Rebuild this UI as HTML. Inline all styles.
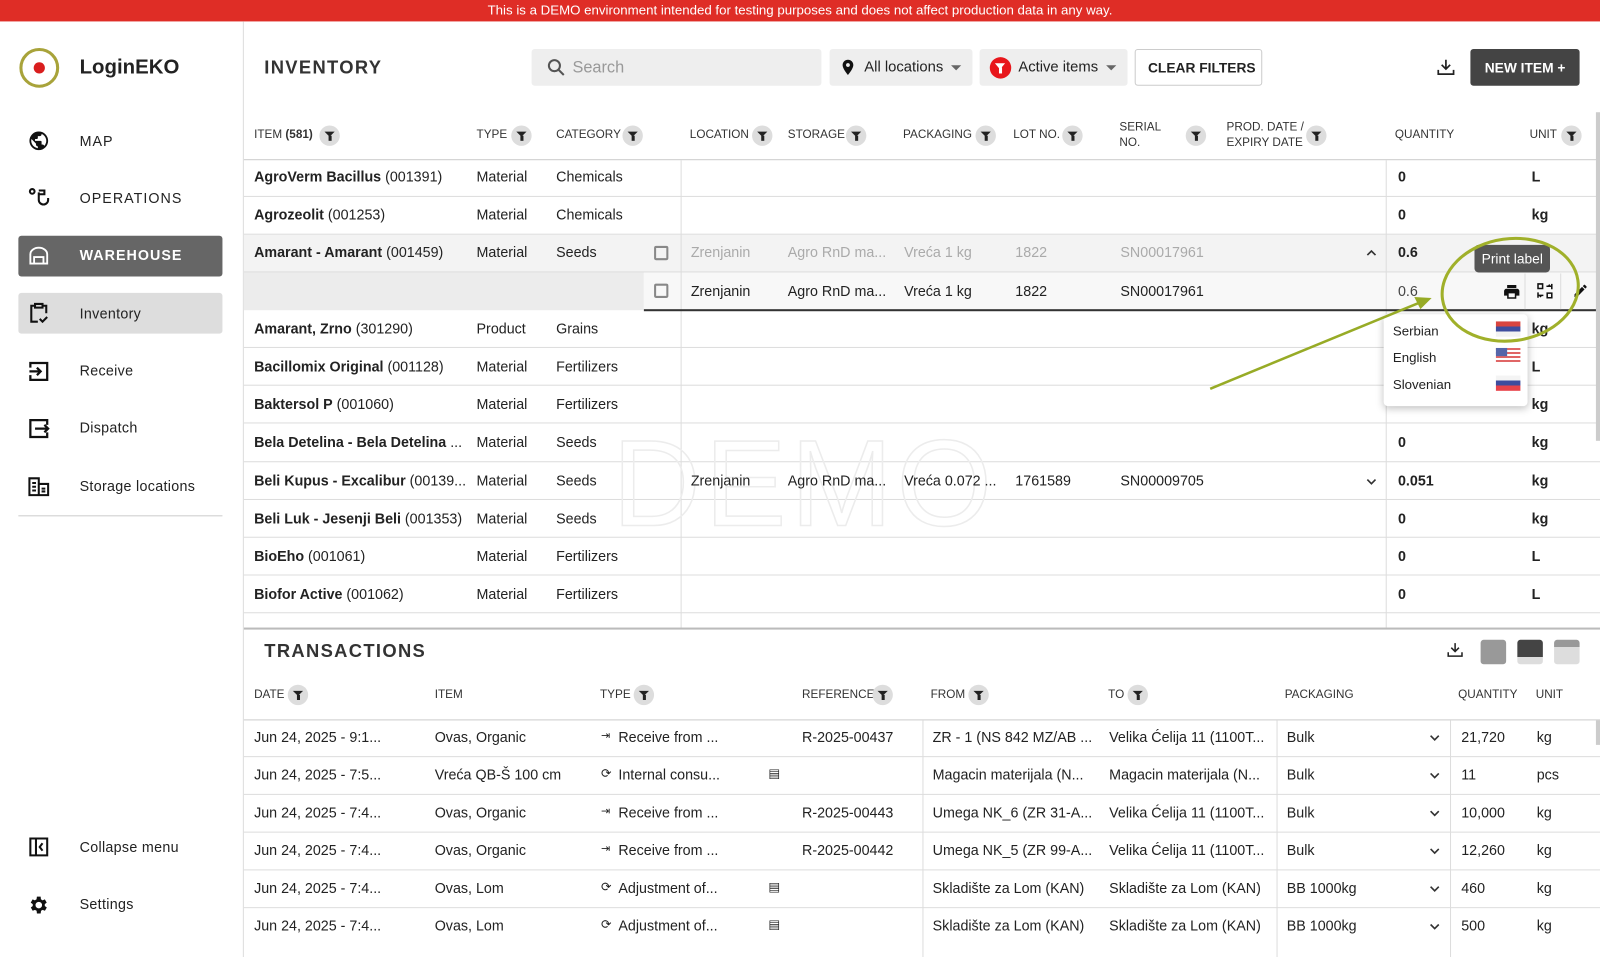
<!DOCTYPE html>
<html><head><meta charset="utf-8">
<style>
*{box-sizing:border-box;margin:0;padding:0}
body{width:1600px;height:938px;overflow:hidden;font-family:"Liberation Sans",Arial,sans-serif;color:#222;background:#fff;position:relative;font-size:14px}
#w{position:absolute;left:0;top:0;width:1568px;height:920px;transform:scale(1.020408);transform-origin:0 0}
.a{position:absolute;white-space:nowrap}
.banner{left:0;top:0;width:1568px;height:21px;background:#df2d26;color:#fff;font-size:13px;text-align:center;line-height:20px}
.side{left:0;top:21px;width:239px;height:917px;border-right:1px solid #ddd}
.nav{font-size:14px;letter-spacing:.3px}
.ic{position:absolute}
.f{position:absolute;width:20px;height:20px;border-radius:50%;background:#ddd}
.f:after{content:"";position:absolute;left:5px;top:6px;border-left:5px solid transparent;border-right:5px solid transparent;border-top:5px solid #222}
.f:before{content:"";position:absolute;left:8.5px;top:10px;width:3px;height:5px;background:#222}
.h{font-size:11.5px;color:#333}
.hl{position:absolute;height:1px;background:#ddd}
.vl{position:absolute;width:1px;background:#ddd}
.b{font-weight:bold}
.g{color:#aaa}
</style></head><body><div id="w">
<div class="a banner">This is a DEMO environment intended for testing purposes and does not affect production data in any way.</div>

<div class="a side"></div>
<div class="ic" style="left:19px;top:47px;width:39px;height:39px;border:3px solid #a8a33a;border-radius:50%"></div>
<div class="ic" style="left:33px;top:61px;width:11px;height:11px;background:#d91e1e;border-radius:50%"></div>
<div class="a" style="left:78px;top:55px;font-size:20px;font-weight:bold">LoginEKO</div>

<svg class="ic" style="left:27px;top:127px" width="22" height="22" viewBox="0 0 24 24"><path d="M12 2a10 10 0 1 0 0 20 10 10 0 0 0 0-20zm-1 17.9A8 8 0 0 1 4.2 10L9 15v1c0 1.1.9 2 2 2zm6.9-2.5A2 2 0 0 0 16 16h-1v-3c0-.6-.4-1-1-1H8v-2h2c.6 0 1-.4 1-1V7h2c1.1 0 2-.9 2-2v-.4a8 8 0 0 1 2.9 12.8z" fill="#111"/></svg>
<div class="a nav" style="left:78px;top:130px;letter-spacing:1px">MAP</div>
<svg class="ic" style="left:27px;top:183px" width="22" height="22" viewBox="0 0 24 24" fill="none" stroke="#111" stroke-width="2.2"><circle cx="5" cy="5" r="2.5"/><path d="M12 6v8a5 5 0 0 0 10 0v-2M12 4h6v4h-6"/></svg>
<div class="a nav" style="left:78px;top:186px;letter-spacing:1px">OPERATIONS</div>
<div class="ic" style="left:18px;top:231px;width:200px;height:40px;background:#666;border-radius:3px"></div>
<svg class="ic" style="left:27px;top:240px" width="22" height="22" viewBox="0 0 24 24" fill="none" stroke="#fff" stroke-width="2"><path d="M3 20V10a9 7 0 0 1 18 0v10zM7 20v-7h10v7"/></svg>
<div class="a nav" style="left:78px;top:242px;color:#fff;font-weight:bold;letter-spacing:1px">WAREHOUSE</div>
<div class="ic" style="left:18px;top:287px;width:200px;height:40px;background:#ddd;border-radius:3px"></div>
<svg class="ic" style="left:27px;top:296px" width="22" height="22" viewBox="0 0 24 24" fill="none" stroke="#111" stroke-width="2.2"><path d="M8 4H4v17h7M16 4h4v8M8 2h8v4H8zM13 18l3 3 5-5"/></svg>
<div class="a nav" style="left:78px;top:299px">Inventory</div>
<svg class="ic" style="left:27px;top:353px" width="22" height="22" viewBox="0 0 24 24" fill="none" stroke="#111" stroke-width="2.4"><path d="M3 8V3h18v18H3v-5M2 12h12M10 8l4 4-4 4"/></svg>
<div class="a nav" style="left:78px;top:355px">Receive</div>
<svg class="ic" style="left:27px;top:409px" width="22" height="22" viewBox="0 0 24 24" fill="none" stroke="#111" stroke-width="2.4"><path d="M21 8V3H3v18h18v-5M8 12h14M18 8l4 4-4 4"/></svg>
<div class="a nav" style="left:78px;top:411px">Dispatch</div>
<svg class="ic" style="left:27px;top:466px" width="22" height="22" viewBox="0 0 24 24" fill="none" stroke="#111" stroke-width="2.2"><path d="M2 3h10v18H2zM12 9h10v12H12zM5 8h4M5 12h4M5 16h4M15 14h4M15 17h4"/></svg>
<div class="a nav" style="left:78px;top:468px">Storage locations</div>
<div class="hl" style="left:18px;top:505px;width:200px;background:#ccc"></div>
<svg class="ic" style="left:27px;top:819px" width="22" height="22" viewBox="0 0 24 24" fill="none" stroke="#111" stroke-width="2.2"><path d="M3 3h18v18H3zM9 3v18M16 8l-3 4 3 4"/></svg>
<div class="a nav" style="left:78px;top:822px">Collapse menu</div>
<svg class="ic" style="left:27px;top:876px" width="22" height="22" viewBox="0 0 24 24"><path d="M19.4 13a7.5 7.5 0 0 0 0-2l2.1-1.6-2-3.5-2.5 1a7 7 0 0 0-1.7-1L15 3h-4l-.4 2.9a7 7 0 0 0-1.7 1l-2.5-1-2 3.5L6.6 11a7.5 7.5 0 0 0 0 2l-2.1 1.6 2 3.5 2.5-1a7 7 0 0 0 1.7 1L11 21h4l.4-2.9a7 7 0 0 0 1.7-1l2.5 1 2-3.5zM13 15.5a3.5 3.5 0 1 1 0-7 3.5 3.5 0 0 1 0 7z" fill="#111" transform="translate(-1 0)"/></svg>
<div class="a nav" style="left:78px;top:878px">Settings</div>

<!-- toolbar -->
<div class="a" style="left:259px;top:56px;font-size:18px;font-weight:bold;letter-spacing:1.3px;color:#333">INVENTORY</div>
<div class="ic" style="left:521px;top:48px;width:284px;height:36px;background:#eee;border-radius:3px"></div>
<svg class="ic" style="left:535px;top:56px" width="20" height="20" viewBox="0 0 24 24" fill="none" stroke="#555" stroke-width="2.4"><circle cx="10" cy="10" r="6.5"/><path d="M15 15l6 6"/></svg>
<div class="a" style="left:561px;top:58px;font-size:16px;color:#999">Search</div>
<div class="ic" style="left:813px;top:48px;width:140px;height:36px;background:#eee;border-radius:3px"></div>
<svg class="ic" style="left:822px;top:56px" width="18" height="20" viewBox="0 0 24 24"><path d="M12 2a7 7 0 0 0-7 7c0 5 7 13 7 13s7-8 7-13a7 7 0 0 0-7-7zm0 9.5a2.5 2.5 0 1 1 0-5 2.5 2.5 0 0 1 0 5z" fill="#111"/></svg>
<div class="a" style="left:847px;top:58px;font-size:14.5px">All locations</div>
<div class="ic" style="left:932px;top:64px;border-left:5px solid transparent;border-right:5px solid transparent;border-top:5px solid #666"></div>
<div class="ic" style="left:960px;top:48px;width:145px;height:36px;background:#eee;border-radius:3px"></div>
<div class="ic" style="left:970px;top:56px;width:21px;height:21px;background:#e8161b;border-radius:50%"></div>
<div class="ic" style="left:975px;top:62px;border-left:5.5px solid transparent;border-right:5.5px solid transparent;border-top:6px solid #fff"></div>
<div class="ic" style="left:979px;top:66px;width:3px;height:6px;background:#fff"></div>
<div class="a" style="left:998px;top:58px;font-size:14.5px">Active items</div>
<div class="ic" style="left:1084px;top:64px;border-left:5px solid transparent;border-right:5px solid transparent;border-top:5px solid #666"></div>
<div class="ic" style="left:1112px;top:48px;width:125px;height:36px;border:1px solid #ccc;border-radius:3px"></div>
<div class="a" style="left:1125px;top:59px;font-size:13.5px;font-weight:bold">CLEAR FILTERS</div>
<svg class="ic" style="left:1406px;top:56px" width="22" height="20" viewBox="0 0 24 24" fill="none" stroke="#222" stroke-width="2"><path d="M12 3v11M7 9l5 5 5-5M3 15v5h18v-5"/></svg>
<div class="ic" style="left:1441px;top:48px;width:107px;height:36px;background:#444;border-radius:3px"></div>
<div class="a" style="left:1455px;top:59px;color:#fff;font-weight:bold;font-size:13.5px">NEW ITEM +</div>

<!-- inventory header -->
<div class="a h" style="left:249px;top:126px">ITEM <b>(581)</b></div><div class="f" style="left:313px;top:123px"></div>
<div class="a h" style="left:467px;top:126px">TYPE</div><div class="f" style="left:501px;top:123px"></div>
<div class="a h" style="left:545px;top:126px">CATEGORY</div><div class="f" style="left:610px;top:123px"></div>
<div class="a h" style="left:676px;top:126px">LOCATION</div><div class="f" style="left:737px;top:123px"></div>
<div class="a h" style="left:772px;top:126px">STORAGE</div><div class="f" style="left:829px;top:123px"></div>
<div class="a h" style="left:885px;top:126px">PACKAGING</div><div class="f" style="left:956px;top:123px"></div>
<div class="a h" style="left:993px;top:126px">LOT NO.</div><div class="f" style="left:1041px;top:123px"></div>
<div class="a h" style="left:1097px;top:118px;line-height:15px">SERIAL<br>NO.</div><div class="f" style="left:1162px;top:123px"></div>
<div class="a h" style="left:1202px;top:118px;line-height:15px">PROD. DATE /<br>EXPIRY DATE</div><div class="f" style="left:1280px;top:123px"></div>
<div class="a h" style="left:1367px;top:126px">QUANTITY</div>
<div class="a h" style="left:1499px;top:126px">UNIT</div><div class="f" style="left:1530px;top:123px"></div>
<div class="hl" style="left:239px;top:156px;width:1329px;background:#ccc"></div>

<!-- row backgrounds -->
<div class="ic" style="left:239px;top:230px;width:1329px;height:37px;background:#f3f3f3"></div>
<div class="ic" style="left:239px;top:267px;width:392px;height:37px;background:#ececec"></div>
<div class="ic" style="left:631px;top:267px;width:937px;height:37px;background:#f8f8f8"></div>
<div class="vl" style="left:667px;top:157px;height:458px"></div>
<div class="vl" style="left:1358px;top:157px;height:458px"></div>
<div class="hl" style="left:239px;top:192px;width:1329px"></div>
<div class="hl" style="left:239px;top:229px;width:1329px"></div>
<div class="hl" style="left:239px;top:266px;width:1329px"></div>
<div class="hl" style="left:631px;top:303px;width:937px;height:2px;background:#333"></div>
<div class="hl" style="left:239px;top:340px;width:1329px"></div>
<div class="hl" style="left:239px;top:377px;width:1329px"></div>
<div class="hl" style="left:239px;top:414px;width:1329px"></div>
<div class="hl" style="left:239px;top:452px;width:1329px"></div>
<div class="hl" style="left:239px;top:489px;width:1329px"></div>
<div class="hl" style="left:239px;top:526px;width:1329px"></div>
<div class="hl" style="left:239px;top:563px;width:1329px"></div>
<div class="hl" style="left:239px;top:600px;width:1329px"></div>
<div class="ic" style="left:1564px;top:110px;width:4px;height:322px;background:#ccc"></div>

<div class="a" style="left:600px;top:405px;font-size:120px;color:transparent;letter-spacing:4px;-webkit-text-stroke:1.5px #ececec">DEMO</div>

<!-- rows -->
<div class="a" style="left:249px;top:165px"><b>AgroVerm Bacillus</b> (001391)</div><div class="a" style="left:467px;top:165px">Material</div><div class="a" style="left:545px;top:165px">Chemicals</div><div class="a b" style="left:1370px;top:165px">0</div><div class="a b" style="left:1501px;top:165px">L</div>
<div class="a" style="left:249px;top:202px"><b>Agrozeolit</b> (001253)</div><div class="a" style="left:467px;top:202px">Material</div><div class="a" style="left:545px;top:202px">Chemicals</div><div class="a b" style="left:1370px;top:202px">0</div><div class="a b" style="left:1501px;top:202px">kg</div>
<div class="a" style="left:249px;top:239px"><b>Amarant - Amarant</b> (001459)</div><div class="a" style="left:467px;top:239px">Material</div><div class="a" style="left:545px;top:239px">Seeds</div>
<div class="ic" style="left:641px;top:241px;width:14px;height:14px;border:2px solid #888;border-radius:2px"></div>
<div class="a g" style="left:677px;top:239px">Zrenjanin</div><div class="a g" style="left:772px;top:239px">Agro RnD ma...</div><div class="a g" style="left:886px;top:239px">Vreća 1 kg</div><div class="a g" style="left:995px;top:239px">1822</div><div class="a g" style="left:1098px;top:239px">SN00017961</div>
<svg class="ic" style="left:1338px;top:242px" width="12" height="12" viewBox="0 0 12 12" fill="none" stroke="#333" stroke-width="1.6"><path d="M2 8l4-4 4 4"/></svg>
<div class="a b" style="left:1370px;top:239px">0.6</div>
<div class="ic" style="left:641px;top:278px;width:14px;height:14px;border:2px solid #888;border-radius:2px"></div>
<div class="a" style="left:677px;top:277px">Zrenjanin</div><div class="a" style="left:772px;top:277px">Agro RnD ma...</div><div class="a" style="left:886px;top:277px">Vreća 1 kg</div><div class="a" style="left:995px;top:277px">1822</div><div class="a" style="left:1098px;top:277px">SN00017961</div>
<div class="a" style="left:1370px;top:277px;color:#444">0.6</div>
<div class="vl" style="left:1494px;top:268px;height:35px"></div><div class="vl" style="left:1529px;top:268px;height:35px"></div>
<svg class="ic" style="left:1472px;top:277px" width="19" height="18" viewBox="0 0 24 24"><path d="M19 8H5a3 3 0 0 0-3 3v6h4v4h12v-4h4v-6a3 3 0 0 0-3-3zm-3 11H8v-5h8zM18 3H6v4h12z" fill="#111"/></svg>
<svg class="ic" style="left:1505px;top:276px" width="18" height="18" viewBox="0 0 24 24" fill="none" stroke="#111" stroke-width="2"><path d="M3 3h6v6H3zM15 15h6v6h-6zM14 6h5l-2-2M10 18H5l2 2M3 14v7M21 3v7"/></svg>
<svg class="ic" style="left:1541px;top:277px" width="16" height="16" viewBox="0 0 24 24"><path d="M3 17.2V21h3.8L17.8 9.9l-3.7-3.7zM20.7 7a1 1 0 0 0 0-1.4l-2.3-2.3a1 1 0 0 0-1.4 0l-1.8 1.8 3.7 3.7z" fill="#111"/></svg>

<div class="a" style="left:249px;top:314px"><b>Amarant, Zrno</b> (301290)</div><div class="a" style="left:467px;top:314px">Product</div><div class="a" style="left:545px;top:314px">Grains</div><div class="a b" style="left:1501px;top:314px">kg</div>
<div class="a" style="left:249px;top:351px"><b>Bacillomix Original</b> (001128)</div><div class="a" style="left:467px;top:351px">Material</div><div class="a" style="left:545px;top:351px">Fertilizers</div><div class="a b" style="left:1501px;top:351px">L</div>
<div class="a" style="left:249px;top:388px"><b>Baktersol P</b> (001060)</div><div class="a" style="left:467px;top:388px">Material</div><div class="a" style="left:545px;top:388px">Fertilizers</div><div class="a b" style="left:1501px;top:388px">kg</div>
<div class="a" style="left:249px;top:425px"><b>Bela Detelina - Bela Detelina</b> ...</div><div class="a" style="left:467px;top:425px">Material</div><div class="a" style="left:545px;top:425px">Seeds</div><div class="a b" style="left:1370px;top:425px">0</div><div class="a b" style="left:1501px;top:425px">kg</div>
<div class="a" style="left:249px;top:463px"><b>Beli Kupus - Excalibur</b> (00139...</div><div class="a" style="left:467px;top:463px">Material</div><div class="a" style="left:545px;top:463px">Seeds</div>
<div class="a" style="left:677px;top:463px">Zrenjanin</div><div class="a" style="left:772px;top:463px">Agro RnD ma...</div><div class="a" style="left:886px;top:463px">Vreća 0.072 ...</div><div class="a" style="left:995px;top:463px">1761589</div><div class="a" style="left:1098px;top:463px">SN00009705</div>
<svg class="ic" style="left:1338px;top:466px" width="12" height="12" viewBox="0 0 12 12" fill="none" stroke="#333" stroke-width="1.6"><path d="M2 4l4 4 4-4"/></svg>
<div class="a b" style="left:1370px;top:463px">0.051</div><div class="a b" style="left:1501px;top:463px">kg</div>
<div class="a" style="left:249px;top:500px"><b>Beli Luk - Jesenji Beli</b> (001353)</div><div class="a" style="left:467px;top:500px">Material</div><div class="a" style="left:545px;top:500px">Seeds</div><div class="a b" style="left:1370px;top:500px">0</div><div class="a b" style="left:1501px;top:500px">kg</div>
<div class="a" style="left:249px;top:537px"><b>BioEho</b> (001061)</div><div class="a" style="left:467px;top:537px">Material</div><div class="a" style="left:545px;top:537px">Fertilizers</div><div class="a b" style="left:1370px;top:537px">0</div><div class="a b" style="left:1501px;top:537px">L</div>
<div class="a" style="left:249px;top:574px"><b>Biofor Active</b> (001062)</div><div class="a" style="left:467px;top:574px">Material</div><div class="a" style="left:545px;top:574px">Fertilizers</div><div class="a b" style="left:1370px;top:574px">0</div><div class="a b" style="left:1501px;top:574px">L</div>

<!-- tooltip + menu -->
<div class="ic" style="left:1445px;top:240px;width:74px;height:27px;background:#555;border-radius:4px"></div>
<div class="a" style="left:1452px;top:246px;color:#fff;font-size:13.5px">Print label</div>
<div class="ic" style="left:1356px;top:308px;width:141px;height:90px;background:#fff;border-radius:4px;box-shadow:0 2px 8px rgba(0,0,0,.25)"></div>
<div class="a" style="left:1365px;top:317px;font-size:13px">Serbian</div>
<div class="a" style="left:1365px;top:343px;font-size:13px">English</div>
<div class="a" style="left:1365px;top:369px;font-size:13px">Slovenian</div>
<div class="ic" style="left:1466px;top:315px;width:24px;height:15px;background:linear-gradient(#d8453f 33%,#3e4d9e 33% 66%,#f2f2f2 66%)"></div>
<div class="ic" style="left:1466px;top:341px;width:24px;height:15px;background:repeating-linear-gradient(#e06666 0 2px,#fff 2px 4px)"></div>
<div class="ic" style="left:1466px;top:341px;width:11px;height:8px;background:#5566aa"></div>
<div class="ic" style="left:1466px;top:368px;width:24px;height:15px;background:linear-gradient(#f4f4f4 33%,#3e4d9e 33% 66%,#e8434a 66%)"></div>
<svg class="ic" style="left:0;top:0;overflow:visible" width="1568" height="920"><ellipse cx="1480" cy="284" rx="67" ry="50" fill="none" stroke="#a0b02a" stroke-width="3" transform="rotate(-8 1480 284)"/><path d="M1186 381L1395 295" stroke="#97ab26" stroke-width="2.5"/><path d="M1403 292l-17-1 6 12z" fill="#97ab26"/></svg>

<!-- transactions -->
<div class="hl" style="left:239px;top:615px;width:1329px;height:2px;background:#bbb"></div>
<div class="a" style="left:259px;top:628px;font-size:18px;font-weight:bold;letter-spacing:1.3px;color:#333">TRANSACTIONS</div>
<svg class="ic" style="left:1416px;top:628px" width="20" height="18" viewBox="0 0 24 24" fill="none" stroke="#222" stroke-width="2"><path d="M12 3v11M7 9l5 5 5-5M3 15v5h18v-5"/></svg>
<div class="ic" style="left:1451px;top:627px;width:25px;height:24px;background:#999;border-radius:3px"></div>
<div class="ic" style="left:1487px;top:627px;width:25px;height:24px;background:linear-gradient(#444 70%,#ddd 70%);border-radius:3px"></div>
<div class="ic" style="left:1523px;top:627px;width:25px;height:24px;background:linear-gradient(#999 30%,#ddd 30%);border-radius:3px"></div>

<div class="a h" style="left:249px;top:675px">DATE</div><div class="f" style="left:282px;top:671px"></div>
<div class="a h" style="left:426px;top:675px">ITEM</div>
<div class="a h" style="left:588px;top:675px">TYPE</div><div class="f" style="left:621px;top:671px"></div>
<div class="a h" style="left:786px;top:675px">REFERENCE</div><div class="f" style="left:855px;top:671px"></div>
<div class="a h" style="left:912px;top:675px">FROM</div><div class="f" style="left:949px;top:671px"></div>
<div class="a h" style="left:1086px;top:675px">TO</div><div class="f" style="left:1105px;top:671px"></div>
<div class="a h" style="left:1259px;top:675px">PACKAGING</div>
<div class="a h" style="left:1429px;top:675px">QUANTITY</div>
<div class="a h" style="left:1505px;top:675px">UNIT</div>
<div class="hl" style="left:239px;top:705px;width:1329px;background:#ccc"></div>
<div class="vl" style="left:904px;top:706px;height:232px"></div>
<div class="vl" style="left:1251px;top:706px;height:232px"></div>
<div class="vl" style="left:1421px;top:706px;height:232px"></div>
<div class="hl" style="left:239px;top:741px;width:1329px"></div>
<div class="hl" style="left:239px;top:778px;width:1329px"></div>
<div class="hl" style="left:239px;top:815px;width:1329px"></div>
<div class="hl" style="left:239px;top:852px;width:1329px"></div>
<div class="hl" style="left:239px;top:889px;width:1329px"></div>
<div class="ic" style="left:1564px;top:706px;width:4px;height:24px;background:#ccc"></div>

<div class="a" style="left:249px;top:714px">Jun 24, 2025 - 9:1...</div><div class="a" style="left:426px;top:714px">Ovas, Organic</div><div class="a" style="left:589px;top:714px;font-size:11px">⇥</div><div class="a" style="left:606px;top:714px">Receive from ...</div><div class="a" style="left:786px;top:714px">R-2025-00437</div><div class="a" style="left:914px;top:714px">ZR - 1 (NS 842 MZ/AB ...</div><div class="a" style="left:1087px;top:714px">Velika Ćelija 11 (1100T...</div><div class="a" style="left:1261px;top:714px">Bulk</div><div class="a" style="left:1432px;top:714px">21,720</div><div class="a" style="left:1506px;top:714px">kg</div>
<div class="a" style="left:249px;top:751px">Jun 24, 2025 - 7:5...</div><div class="a" style="left:426px;top:751px">Vreća QB-Š 100 cm</div><div class="a" style="left:589px;top:751px;font-size:12px">⟳</div><div class="a" style="left:606px;top:751px">Internal consu...</div><div class="a" style="left:753px;top:751px;font-size:12px">▤</div><div class="a" style="left:914px;top:751px">Magacin materijala (N...</div><div class="a" style="left:1087px;top:751px">Magacin materijala (N...</div><div class="a" style="left:1261px;top:751px">Bulk</div><div class="a" style="left:1432px;top:751px">11</div><div class="a" style="left:1506px;top:751px">pcs</div>
<div class="a" style="left:249px;top:788px">Jun 24, 2025 - 7:4...</div><div class="a" style="left:426px;top:788px">Ovas, Organic</div><div class="a" style="left:589px;top:788px;font-size:11px">⇥</div><div class="a" style="left:606px;top:788px">Receive from ...</div><div class="a" style="left:786px;top:788px">R-2025-00443</div><div class="a" style="left:914px;top:788px">Umega NK_6 (ZR 31-A...</div><div class="a" style="left:1087px;top:788px">Velika Ćelija 11 (1100T...</div><div class="a" style="left:1261px;top:788px">Bulk</div><div class="a" style="left:1432px;top:788px">10,000</div><div class="a" style="left:1506px;top:788px">kg</div>
<div class="a" style="left:249px;top:825px">Jun 24, 2025 - 7:4...</div><div class="a" style="left:426px;top:825px">Ovas, Organic</div><div class="a" style="left:589px;top:825px;font-size:11px">⇥</div><div class="a" style="left:606px;top:825px">Receive from ...</div><div class="a" style="left:786px;top:825px">R-2025-00442</div><div class="a" style="left:914px;top:825px">Umega NK_5 (ZR 99-A...</div><div class="a" style="left:1087px;top:825px">Velika Ćelija 11 (1100T...</div><div class="a" style="left:1261px;top:825px">Bulk</div><div class="a" style="left:1432px;top:825px">12,260</div><div class="a" style="left:1506px;top:825px">kg</div>
<div class="a" style="left:249px;top:862px">Jun 24, 2025 - 7:4...</div><div class="a" style="left:426px;top:862px">Ovas, Lom</div><div class="a" style="left:589px;top:862px;font-size:12px">⟳</div><div class="a" style="left:606px;top:862px">Adjustment of...</div><div class="a" style="left:753px;top:862px;font-size:12px">▤</div><div class="a" style="left:914px;top:862px">Skladište za Lom (KAN)</div><div class="a" style="left:1087px;top:862px">Skladište za Lom (KAN)</div><div class="a" style="left:1261px;top:862px">BB 1000kg</div><div class="a" style="left:1432px;top:862px">460</div><div class="a" style="left:1506px;top:862px">kg</div>
<div class="a" style="left:249px;top:899px">Jun 24, 2025 - 7:4...</div><div class="a" style="left:426px;top:899px">Ovas, Lom</div><div class="a" style="left:589px;top:899px;font-size:12px">⟳</div><div class="a" style="left:606px;top:899px">Adjustment of...</div><div class="a" style="left:753px;top:899px;font-size:12px">▤</div><div class="a" style="left:914px;top:899px">Skladište za Lom (KAN)</div><div class="a" style="left:1087px;top:899px">Skladište za Lom (KAN)</div><div class="a" style="left:1261px;top:899px">BB 1000kg</div><div class="a" style="left:1432px;top:899px">500</div><div class="a" style="left:1506px;top:899px">kg</div>
<svg class="ic" style="left:1400px;top:717px" width="12" height="200" viewBox="0 0 12 200" fill="none" stroke="#333" stroke-width="1.6"><path d="M2 4l4 4 4-4M2 41l4 4 4-4M2 78l4 4 4-4M2 115l4 4 4-4M2 152l4 4 4-4M2 189l4 4 4-4"/></svg>
</div></body></html>
